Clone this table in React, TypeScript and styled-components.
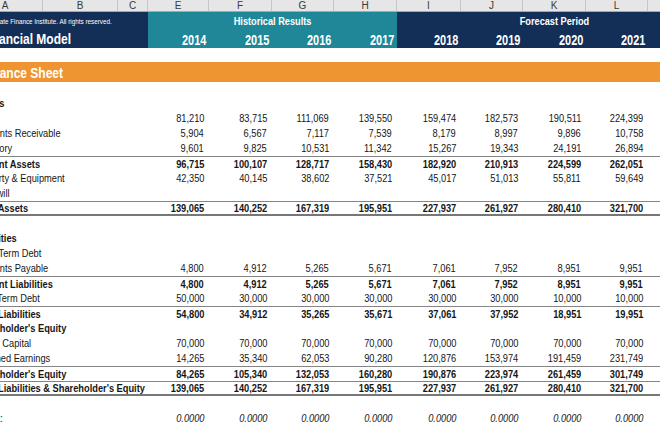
import React from "react";
import styled, { createGlobalStyle, css } from "styled-components";

const WIDTHS = [75, 75, 30, 61, 63, 62, 63, 64, 62, 63, 62, 63];
const LETTERS = ["A", "B", "C", "E", "F", "G", "H", "I", "J", "K", "L", "M"];
const ALL_COLS = WIDTHS.map((w) => `${w}px`).join(" ");
const BODY_COLS = WIDTHS.slice(0, 11).map((w) => `${w}px`).join(" ");

const NAVY = "#132f57";
const TEAL = "#1f8797";
const ORANGE = "#ee9531";

const Global = createGlobalStyle`
  html, body { margin: 0; padding: 0; background: #ffffff; overflow: hidden; }
  body { font-family: "Liberation Sans", Arial, sans-serif; }
`;

const Viewport = styled.div`
  width: 660px;
  height: 440px;
  overflow: hidden;
  background: #ffffff;
`;

const Sheet = styled.div`
  margin-left: -32px;
  width: max-content;
  font-family: "Liberation Sans", Arial, sans-serif;
`;

const LetterRow = styled.div`
  display: grid;
  grid-template-columns: ${ALL_COLS};
  height: 12px;
  box-sizing: border-box;
  background: #e6e6e6;
  border-bottom: 1px solid #a8a8a8;
`;

const Letter = styled.div`
  font-size: 10px;
  line-height: 11px;
  color: #3a3a3a;
  text-align: center;
  border-right: 1px solid #c6c6c6;
`;

const BandRow = styled.div<{ $h: number }>`
  display: grid;
  grid-template-columns: ${ALL_COLS};
  height: ${(p) => p.$h}px;
`;

const BandCell = styled.div<{ $tone: "navy" | "teal"; $span?: number; $align?: "left" | "center" | "right" }>`
  grid-column: span ${(p) => p.$span ?? 1};
  background: ${(p) => (p.$tone === "navy" ? NAVY : TEAL)};
  color: #ffffff;
  display: flex;
  align-items: center;
  justify-content: ${(p) => (p.$align === "center" ? "center" : p.$align === "right" ? "flex-end" : "flex-start")};
  padding-right: ${(p) => (p.$align === "right" ? "3px" : "0")};
  white-space: nowrap;
  overflow: visible;
  min-width: 0;
`;

const Copyright = styled.span`
  font-size: 6.3px;
  padding-left: 6px;
  padding-top: 2px;
`;

/* The sheet's fonts are narrow faces: drawn with a horizontal squeeze */
const Squeeze = styled.span<{ $size: number; $scale: number; $origin: "left" | "center" | "right"; $pad?: number }>`
  display: inline-block;
  font-weight: bold;
  font-size: ${(p) => p.$size}px;
  transform: scaleX(${(p) => p.$scale});
  transform-origin: ${(p) => p.$origin} center;
  padding-top: ${(p) => p.$pad ?? 1}px;
  white-space: nowrap;
`;

const TitleWrap = styled.div`
  padding-left: 13px;
`;

const Spacer = styled.div<{ $h: number }>`
  height: ${(p) => p.$h}px;
`;

const TitleBar = styled.div`
  height: 20px;
  background: ${ORANGE};
  color: #ffffff;
  display: flex;
  align-items: center;
`;

const Row = styled.div<{ $top?: boolean; $thick?: boolean; $bold?: boolean }>`
  display: grid;
  grid-template-columns: ${BODY_COLS};
  height: 15px;
  box-sizing: border-box;
  color: #161616;
  font-weight: ${(p) => (p.$bold ? "bold" : "normal")};
  align-items: center;
  ${(p) =>
    p.$top &&
    css`
      border-top: 1px solid #858585;
    `}
  ${(p) =>
    p.$thick &&
    css`
      border-bottom: 2px solid #777777;
    `}
`;

const Label = styled.div`
  grid-column: 1 / 4;
  padding-left: 6px;
  white-space: nowrap;
  overflow: visible;
  display: flex;
  align-items: center;
`;

const Value = styled.div<{ $italic?: boolean }>`
  padding-right: 5px;
  white-space: nowrap;
  display: flex;
  align-items: center;
  justify-content: flex-end;
  font-style: ${(p) => (p.$italic ? "italic" : "normal")};
`;

const BodyText = styled.span<{ $origin: "left" | "right" }>`
  display: inline-block;
  font-size: 10.3px;
  line-height: 1;
  margin-top: 2px;
  transform: scaleX(0.9);
  transform-origin: ${(p) => p.$origin} center;
`;

type Line = {
  label: string;
  values?: string[];
  bold?: boolean;
  top?: boolean;
  thick?: boolean;
  italic?: boolean;
};

const YEARS = ["2014", "2015", "2016", "2017", "2018", "2019", "2020", "2021"];

const LINES: Line[] = [
  { label: "Assets", bold: true },
  { label: "Cash", values: ["81,210", "83,715", "111,069", "139,550", "159,474", "182,573", "190,511", "224,399"] },
  { label: "Accounts Receivable", values: ["5,904", "6,567", "7,117", "7,539", "8,179", "8,997", "9,896", "10,758"] },
  { label: "Inventory", values: ["9,601", "9,825", "10,531", "11,342", "15,267", "19,343", "24,191", "26,894"] },
  { label: "Current Assets", bold: true, top: true, values: ["96,715", "100,107", "128,717", "158,430", "182,920", "210,913", "224,599", "262,051"] },
  { label: "Property & Equipment", values: ["42,350", "40,145", "38,602", "37,521", "45,017", "51,013", "55,811", "59,649"] },
  { label: "Goodwill" },
  { label: "Total Assets", bold: true, top: true, thick: true, values: ["139,065", "140,252", "167,319", "195,951", "227,937", "261,927", "280,410", "321,700"] },
  { label: "" },
  { label: "Liabilities", bold: true },
  { label: "Short Term Debt" },
  { label: "Accounts Payable", values: ["4,800", "4,912", "5,265", "5,671", "7,061", "7,952", "8,951", "9,951"] },
  { label: "Current Liabilities", bold: true, top: true, values: ["4,800", "4,912", "5,265", "5,671", "7,061", "7,952", "8,951", "9,951"] },
  { label: "Long Term Debt", values: ["50,000", "30,000", "30,000", "30,000", "30,000", "30,000", "10,000", "10,000"] },
  { label: "Total Liabilities", bold: true, top: true, values: ["54,800", "34,912", "35,265", "35,671", "37,061", "37,952", "18,951", "19,951"] },
  { label: "Shareholder's Equity", bold: true },
  { label: "Equity Capital", values: ["70,000", "70,000", "70,000", "70,000", "70,000", "70,000", "70,000", "70,000"] },
  { label: "Retained Earnings", values: ["14,265", "35,340", "62,053", "90,280", "120,876", "153,974", "191,459", "231,749"] },
  { label: "Shareholder's Equity", bold: true, top: true, values: ["84,265", "105,340", "132,053", "160,280", "190,876", "223,974", "261,459", "301,749"] },
  { label: "Total Liabilities & Shareholder's Equity", bold: true, top: true, thick: true, values: ["139,065", "140,252", "167,319", "195,951", "227,937", "261,927", "280,410", "321,700"] },
  { label: "" },
  { label: "Check:", italic: true, values: Array(8).fill("0.0000") },
];

export default function App() {
  return (
    <Viewport>
      <Global />
      <Sheet>
        <LetterRow>
          {LETTERS.map((l) => (
            <Letter key={l}>{l}</Letter>
          ))}
        </LetterRow>
        <BandRow $h={16}>
          <BandCell $tone="navy" $span={3}>
            <Copyright>© Corporate Finance Institute. All rights reserved.</Copyright>
          </BandCell>
          <BandCell $tone="teal" $span={4} $align="center">
            <Squeeze $size={11.5} $scale={0.8} $origin="center">Historical Results</Squeeze>
          </BandCell>
          <BandCell $tone="navy" $span={5} $align="center">
            <Squeeze $size={11.5} $scale={0.8} $origin="center">Forecast Period</Squeeze>
          </BandCell>
        </BandRow>
        <BandRow $h={19}>
          <BandCell $tone="navy" $span={3}>
            <TitleWrap>
              <Squeeze $size={15} $scale={0.8} $origin="left">Financial Model</Squeeze>
            </TitleWrap>
          </BandCell>
          {YEARS.map((y, i) => (
            <BandCell key={y} $tone={i < 4 ? "teal" : "navy"} $align="right">
              <Squeeze $size={15} $scale={0.73} $origin="right" $pad={3}>{y}</Squeeze>
            </BandCell>
          ))}
          <BandCell $tone="navy" />
        </BandRow>
        <Spacer $h={15} />
        <TitleBar>
          <TitleWrap>
            <Squeeze $size={15} $scale={0.8} $origin="left">Balance Sheet</Squeeze>
          </TitleWrap>
        </TitleBar>
        <Spacer $h={14} />
        {LINES.map((line, idx) => (
          <Row key={idx} $top={line.top} $thick={line.thick} $bold={line.bold}>
            <Label>
              <BodyText $origin="left">{line.label}</BodyText>
            </Label>
            {(line.values ?? Array(8).fill("")).map((v, i) => (
              <Value key={i} $italic={line.italic}>
                <BodyText $origin="right">{v}</BodyText>
              </Value>
            ))}
          </Row>
        ))}
      </Sheet>
    </Viewport>
  );
}
